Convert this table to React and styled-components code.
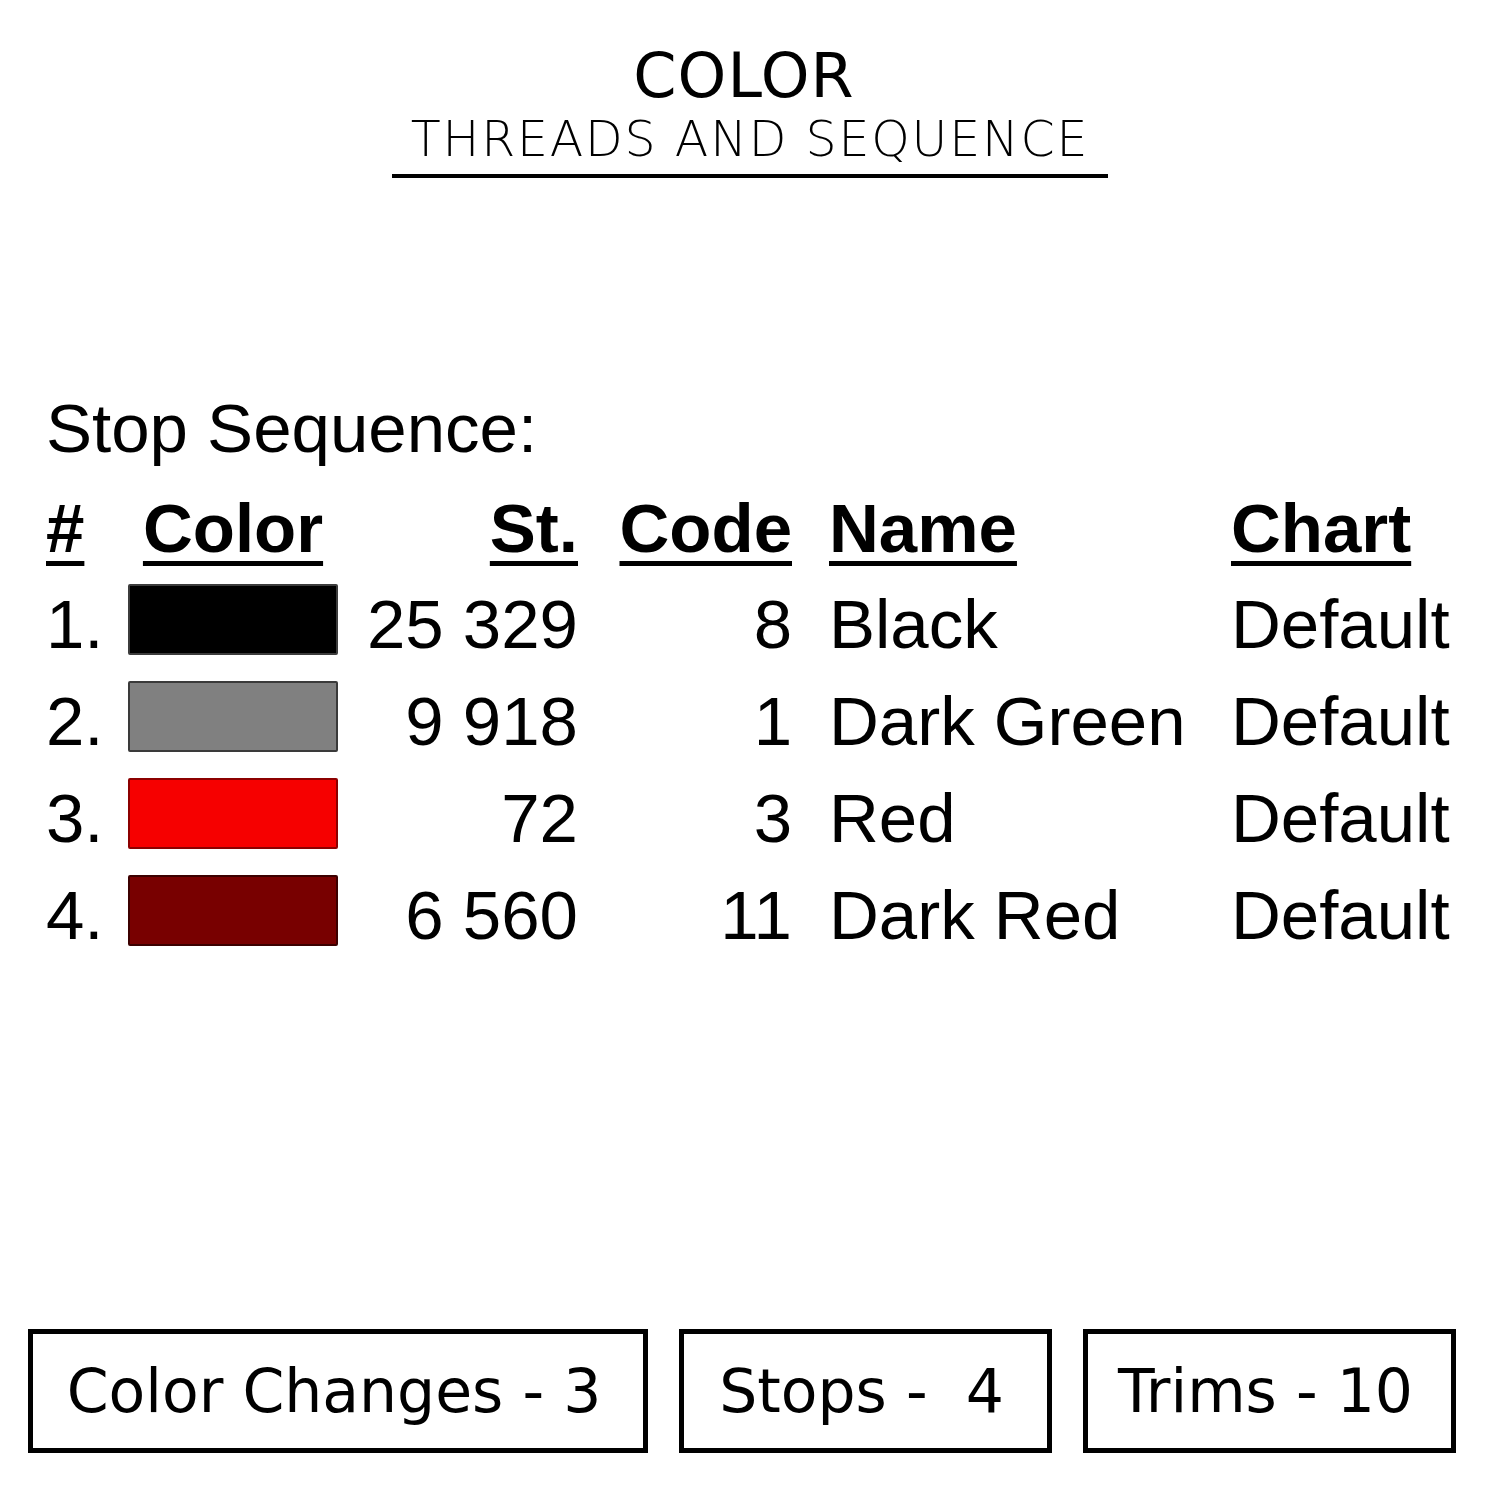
import React from 'react';
import styled, { createGlobalStyle } from 'styled-components';

const GlobalStyle = createGlobalStyle`
  body {
    margin: 0;
    background: #fff;
    color: #000;
  }
`;

const threads = [
  { n: '1.', fill: '#000000', edge: '#3c3c3c', st: '25 329', code: '8', name: 'Black', chart: 'Default' },
  { n: '2.', fill: '#808080', edge: '#3a3a3a', st: '9 918', code: '1', name: 'Dark Green', chart: 'Default' },
  { n: '3.', fill: '#f60000', edge: '#8c0000', st: '72', code: '3', name: 'Red', chart: 'Default' },
  { n: '4.', fill: '#780000', edge: '#3c0000', st: '6 560', code: '11', name: 'Dark Red', chart: 'Default' },
];

const stats = [
  { label: 'Color Changes - 3', w: 620 },
  { label: 'Stops -  4', w: 373 },
  { label: 'Trims - 10', w: 373 },
];

const Page = styled.div`
  width: 1500px;
  min-height: 1500px;
  box-sizing: border-box;
  display: flex;
  flex-direction: column;
  padding-bottom: 47px;
  font-family: "DejaVu Sans", "Open Sans", sans-serif;
`;

const Heading = styled.header`
  display: flex;
  justify-content: center;
  padding-top: 41px;
`;

const HeadingInner = styled.div`
  display: flex;
  flex-direction: column;
  align-items: center;
  padding: 0 19px 6px;
  border-bottom: 4px solid #000;
`;

const Title = styled.h1`
  margin: 0;
  padding-right: 12px;
  font-size: 62px;
  line-height: 70px;
  font-weight: 500;
  letter-spacing: 1px;
`;

const Subtitle = styled.div`
  font-size: 49px;
  line-height: 57px;
  font-weight: 300;
  letter-spacing: 1.8px;
`;

const Sequence = styled.section`
  margin-top: 201px;
  padding-left: 46px;
  font-family: "Liberation Sans", Arial, sans-serif;
  font-size: 69px;
`;

const SeqTitle = styled.div`
  line-height: 100px;
  margin-bottom: 3px;
`;

const Row = styled.div`
  display: grid;
  grid-template-columns: 82px 210px 240px 214px 439px 1fr;
  line-height: ${(p) => (p.$head ? 94 : 97)}px;
  font-weight: ${(p) => (p.$head ? 700 : 400)};
`;

const Cell = styled.div`
  text-align: ${(p) => p.$align || 'left'};
  padding-left: ${(p) => p.$pad || 0}px;
  white-space: nowrap;
`;

const HeadLabel = styled.span`
  text-decoration: underline;
  text-decoration-thickness: 5px;
  text-underline-offset: 9px;
  text-decoration-skip-ink: none;
`;

const Swatch = styled.div`
  width: 210px;
  height: 71px;
  margin-top: 8px;
  box-sizing: border-box;
  border: 2px solid ${(p) => p.$edge};
  border-radius: 2px;
  background: ${(p) => p.$fill};
`;

const Footer = styled.footer`
  margin-top: auto;
  display: flex;
  gap: 31px;
  padding-left: 28px;
`;

const StatBox = styled.div`
  width: ${(p) => p.$w}px;
  height: 124px;
  box-sizing: border-box;
  border: 5px solid #000;
  display: flex;
  align-items: center;
  justify-content: center;
  padding-right: 8px;
  font-size: 60px;
  line-height: 70px;
  white-space: pre;
`;

export default function App() {
  return (
    <Page>
      <GlobalStyle />
      <Heading>
        <HeadingInner>
          <Title>COLOR</Title>
          <Subtitle>THREADS AND SEQUENCE</Subtitle>
        </HeadingInner>
      </Heading>

      <Sequence>
        <SeqTitle>Stop Sequence:</SeqTitle>
        <Row $head>
          <Cell><HeadLabel>#</HeadLabel></Cell>
          <Cell $align="center"><HeadLabel>Color</HeadLabel></Cell>
          <Cell $align="right"><HeadLabel>St.</HeadLabel></Cell>
          <Cell $align="right"><HeadLabel>Code</HeadLabel></Cell>
          <Cell $pad={37}><HeadLabel>Name</HeadLabel></Cell>
          <Cell><HeadLabel>Chart</HeadLabel></Cell>
        </Row>
        {threads.map((t) => (
          <Row key={t.n}>
            <Cell>{t.n}</Cell>
            <Swatch $fill={t.fill} $edge={t.edge} />
            <Cell $align="right">{t.st}</Cell>
            <Cell $align="right">{t.code}</Cell>
            <Cell $pad={37}>{t.name}</Cell>
            <Cell>{t.chart}</Cell>
          </Row>
        ))}
      </Sequence>

      <Footer>
        {stats.map((s) => (
          <StatBox key={s.label} $w={s.w}>{s.label}</StatBox>
        ))}
      </Footer>
    </Page>
  );
}
